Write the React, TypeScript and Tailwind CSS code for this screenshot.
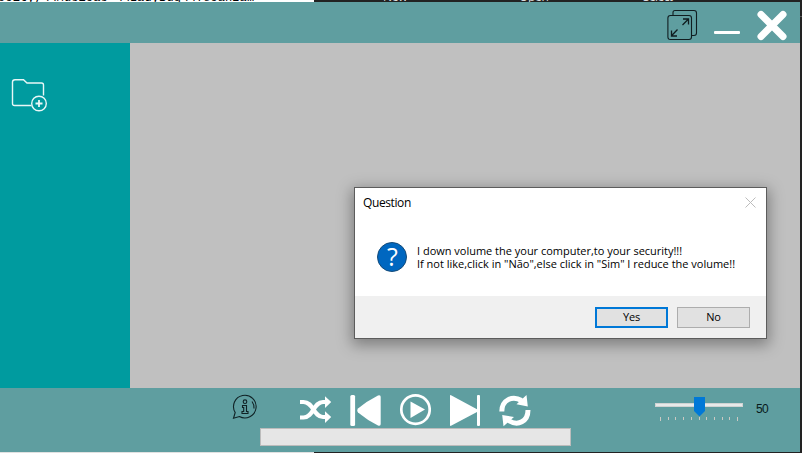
import React from "react";

const ticks = [0, 8, 15, 23, 31, 39, 46, 54, 62, 69, 77];

function BackdropStrip() {
  return (
    <div className="flex h-[2px] shrink-0 overflow-hidden">
      <div className="h-[2px] w-[314px] shrink-0 overflow-hidden bg-white font-['Liberation_Mono',monospace] text-[12px] leading-[14px] whitespace-pre text-black">
        <div className="-mt-[9px] -ml-[2px] tracking-[0.120px]">ocity,\\Musicas \\LadyBug\\Tecanza…</div>
      </div>
      <div className="flex h-[2px] flex-1 overflow-hidden bg-[#222] font-['Open_Sans',sans-serif] text-[12px] leading-[14px] text-[#ddd]">
        <div className="-mt-[10px] ml-[69px] w-[136px] tracking-[-0.300px]">New</div>
        <div className="-mt-[10px] w-[124px] tracking-[-0.300px]">Open</div>
        <div className="-mt-[10px] tracking-[-0.600px]">Select</div>
      </div>
    </div>
  );
}

function TitleBar() {
  return (
    <header className="flex h-[41px] shrink-0 items-start justify-end bg-[#5f9ea0]">
      <svg className="mt-[7px] mr-[15px]" width="32" height="32" fill="none" stroke="#101d20" strokeWidth="1.1">
        <path d="M6 6V3.500Q6 1.500 8 1.500H27Q29.500 1.500 29.500 4V24Q29.500 26.500 27 26.500H25" />
        <rect x="0.900" y="6.500" width="23.600" height="24" rx="2.500" />
        <path d="M15.500 16L21.500 10M16 10H21.500V15.500M10.500 20.500L4.500 26.800M4.500 21.500V27H10" strokeWidth="1.300" />
      </svg>
      <div className="mt-[29px] h-[3px] w-[26px] rounded-[1px] bg-white" />
      <svg className="mt-[8px] mr-[12px] ml-[16px]" width="32" height="31" stroke="white" strokeWidth="7" strokeLinecap="round">
        <path d="M5 4.500L27 26.500M27 4.500L5 26.500" />
      </svg>
    </header>
  );
}

function Sidebar() {
  return (
    <aside className="w-[130px] shrink-0 bg-[#009b9f] pt-[35px] pl-[11px]">
      <svg width="38" height="34" fill="none" stroke="#e9f7f7" strokeWidth="1.4">
        <path d="M20.500 27.500H3.500Q1.500 27.500 1.500 25.500V4Q1.500 1.700 4 1.700H12.500L16 5H30.500Q32.500 5 32.500 7V17.500" />
        <circle cx="28" cy="25.500" r="7.300" />
        <path d="M28 22V29M24.500 25.500H31.500" strokeWidth="1.800" />
      </svg>
    </aside>
  );
}

function Volume() {
  return (
    <div className="mt-[9px] ml-[124px] flex">
      <div className="relative w-[88px]">
        <div className="mt-[6px] h-[4px] border border-[#d0d3d3] bg-[#e7eaea]" />
        <div className="mt-[10px] ml-[5px] flex">
          {ticks.map((x, i) => (
            <i
              key={x}
              className={`w-px shrink-0 bg-[#cbc9c3] ${i === 0 || i === 10 ? "h-[4px]" : "h-[3px]"}`}
              style={{ marginRight: i < 10 ? ticks[i + 1] - x - 1 : 0 }}
            />
          ))}
        </div>
        <svg className="absolute top-0 left-[39px]" width="11" height="19" fill="#0078d7">
          <path d="M0 0H11V14L5.500 19.500L0 14Z" />
        </svg>
      </div>
      <span className="mt-[4px] ml-[13px] font-['Liberation_Sans',Arial,sans-serif] text-[12px] leading-[16px] tracking-[-0.700px] text-[#07191b]">50</span>
    </div>
  );
}

function PlayerBar() {
  return (
    <footer className="h-[64px] shrink-0 bg-[#5f9ea0]">
      <div className="flex h-[40px] items-start pl-[232px]">
        <svg className="mt-[6px] mr-[41px]" width="26" height="26" fill="none" stroke="#102225" strokeWidth="1.1">
          <path d="M3.200 18.500A11.300 11.300 0 1 1 7.400 22.500L1.500 24.300L3.200 18.500Z" />
          <path d="M20 7.500Q22.300 10.500 22 14.500" />
          <circle cx="13" cy="7.700" r="1.800" />
          <path d="M10.500 11.500H14.500V17.500H16V19.500H10V17.500H11.700V13.500H10.500Z" />
        </svg>
        <svg className="mt-[8px] mr-[18px]" width="33" height="28" fill="none" stroke="white" strokeWidth="4.2">
          <path d="M1 6H4.500C14.500 6 14.500 21 24 21H27M1 21.500H4.500C14.500 21.500 14.500 6 24 6H27" />
          <path d="M26 0.300L32.200 6L26 12ZM26 15.300L32.200 21L26 27Z" fill="white" stroke="none" />
        </svg>
        <svg className="mt-[7px] mr-[17px]" width="32" height="32" fill="white">
          <rect x="0.300" width="4.800" height="31" rx="1.500" />
          <path d="M28 0.500Q30.700 -0.500 30.700 2V29Q30.700 31.500 28 30.500Q17 25 8 17.500Q6.500 15.500 8 13.500Q17 6 28 0.500Z" />
        </svg>
        <svg className="mt-[6px] mr-[18px]" width="32" height="32" fill="none" stroke="white" strokeWidth="2.7">
          <circle cx="16.500" cy="15.600" r="14.200" />
          <path d="M11.500 7.500L26 15.500L11.500 24Z" fill="white" stroke="none" />
        </svg>
        <svg className="mt-[7px] mr-[18px]" width="32" height="32" fill="white">
          <path d="M1 1Q1 -0.500 2.500 0.500L28 14.200V1Q28 0 29 0H30Q31 0 31 1V30Q31 31 30 31H29Q28 31 28 30V17L2.500 30.500Q1 31.500 1 30Z" />
        </svg>
        <svg className="mt-[7px]" width="32" height="32" fill="none" stroke="white" strokeWidth="5">
          <path d="M2.800 16.500C2.800 5 13.500 0 22.500 5.500M29 15C29 26.500 19 31.500 9.500 25.500" />
          <path d="M27.500 0L28.800 11.500L17.500 9.300ZM4.500 31.200L3.200 20L15 22Z" fill="white" stroke="none" />
        </svg>
        <Volume />
      </div>
      <div className="ml-[260px] h-[18px] w-[311px] border border-[#bcbcbc] bg-[#e6e6e6]" />
    </footer>
  );
}

function QuestionDialog() {
  return (
    <section className="absolute top-[187px] left-[354px] flex h-[152px] w-[413px] flex-col border border-[#5c5c5c] bg-white font-['Open_Sans','Noto_Sans',sans-serif] text-black shadow-[0_4px_14px_2px_rgba(0,0,0,0.35)]">
      <div className="flex justify-between pt-[6px] pr-[10px] pl-[8px] text-[12px] leading-[18px]">
        <h1 className="tracking-[-0.400px]">Question</h1>
        <svg className="mt-[3px]" width="11" height="11" stroke="#bcbcbc" strokeWidth="1">
          <path d="M0.500 0.500L10.500 10.500M10.500 0.500L0.500 10.500" />
        </svg>
      </div>
      <div className="flex flex-1 pt-[30px] pl-[22px]">
        <svg width="30" height="30" className="shrink-0">
          <circle cx="15" cy="15" r="14.500" fill="#0067c0" stroke="#154b78" />
          <text x="15.500" y="24" textAnchor="middle" fill="white" fontSize="25" fontFamily="Open Sans">?</text>
        </svg>
        <div className="mt-[2px] ml-[10px] text-[11px] leading-[13px] whitespace-nowrap">
          <p className="tracking-[-0.010px]">I down volume the your computer,to your security!!!<br />If not like,click in "Não",else click in "Sim" I reduce the volume!!</p>
        </div>
      </div>
      <div className="flex h-[42px] items-start justify-end gap-[9px] bg-[#f0f0f0] pt-[11px] pr-[16px] text-[11px] tracking-[-0.250px]">
        <button className="flex h-[21px] w-[73px] items-center justify-center border-2 border-[#0078d7] bg-[#e1e1e1]">Yes</button>
        <button className="flex h-[21px] w-[73px] items-center justify-center border border-[#adadad] bg-[#e1e1e1]">No</button>
      </div>
    </section>
  );
}

export default function App() {
  return (
    <div className="relative flex h-[453px] w-[802px] overflow-hidden bg-[#222]">
      <div className="flex w-[800px] flex-col">
        <BackdropStrip />
        <TitleBar />
        <div className="flex flex-1">
          <Sidebar />
          <main className="flex-1 bg-[#c0c0c0]" />
        </div>
        <PlayerBar />
        <div className="h-px w-[314px] shrink-0 bg-[#e1e1e1]" />
      </div>
      <div className="mt-[16px] h-px w-[2px] bg-[#555]" />
      <QuestionDialog />
    </div>
  );
}
